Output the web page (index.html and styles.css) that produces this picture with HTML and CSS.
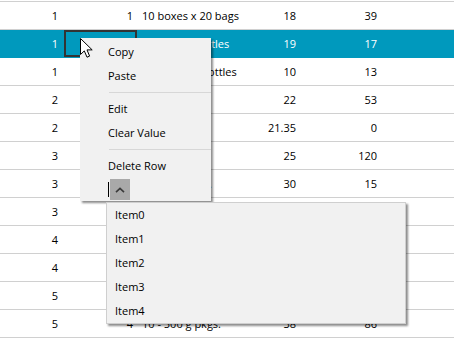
FILE: index.html
```html
<!DOCTYPE html>
<html>
<head>
<title>Products Grid</title>
<meta name="viewport" content="width=device-width, initial-scale=1">
<link rel="stylesheet" href="styles.css">
</head>
<body>
  <div class="grid">
    <div class="row"><span class="num">1</span><span class="num">1</span><span class="text">10 boxes x 20 bags</span><span class="num">18</span><span class="num">39</span><span></span></div>
    <div class="row selected"><span class="num">1</span><span class="num focus">1</span><span class="text">24 - 12 oz bottles</span><span class="num">19</span><span class="num">17</span><span></span></div>
    <div class="row"><span class="num">1</span><span class="num">2</span><span class="text">12 - 550 ml bottles</span><span class="num">10</span><span class="num">13</span><span></span></div>
    <div class="row"><span class="num">2</span><span class="num">2</span><span class="text">48 - 6 oz jars</span><span class="num">22</span><span class="num">53</span><span></span></div>
    <div class="row"><span class="num">2</span><span class="num">2</span><span class="text">36 boxes</span><span class="num">21.35</span><span class="num">0</span><span></span></div>
    <div class="row"><span class="num">3</span><span class="num">2</span><span class="text">12 - 8 oz jars</span><span class="num">25</span><span class="num">120</span><span></span></div>
    <div class="row"><span class="num">3</span><span class="num">7</span><span class="text">12 - 1 lb pkgs.</span><span class="num">30</span><span class="num">15</span><span></span></div>
    <div class="row"><span class="num">3</span><span class="num">2</span><span class="text">12 - 12 oz jars</span><span class="num">40</span><span class="num">6</span><span></span></div>
    <div class="row"><span class="num">4</span><span class="num">6</span><span class="text">18 - 500 g pkgs.</span><span class="num">97</span><span class="num">29</span><span></span></div>
    <div class="row"><span class="num">4</span><span class="num">8</span><span class="text">12 - 200 ml jars</span><span class="num">31</span><span class="num">31</span><span></span></div>
    <div class="row"><span class="num">5</span><span class="num">4</span><span class="text">1 kg pkg.</span><span class="num">21</span><span class="num">22</span><span></span></div>
    <div class="row"><span class="num">5</span><span class="num">4</span><span class="text">10 - 500 g pkgs.</span><span class="num">38</span><span class="num">86</span><span></span></div>
    <div class="row"><span></span><span></span><span></span><span></span><span></span><span></span></div>
  </div>

  <div class="menu">
    <div class="item">Copy</div>
    <div class="item">Paste</div>
    <div class="sep"></div>
    <div class="item">Edit</div>
    <div class="item">Clear Value</div>
    <div class="sep"></div>
    <div class="item">Delete Row</div>
    <div class="scroll-row">
      <span class="caret"></span>
      <span class="scroll-btn">
        <svg width="10" height="6" viewBox="0 0 10 6"><path d="M1 5.2 L5 1.4 L9 5.2" fill="none" stroke="#3a3a3a" stroke-width="1.6"/></svg>
      </span>
    </div>
  </div>

  <div class="dropdown">
    <div class="item">Item0</div>
    <div class="item">Item1</div>
    <div class="item">Item2</div>
    <div class="item">Item3</div>
    <div class="item">Item4</div>
  </div>

  <!-- mouse pointer -->
  <svg class="pointer" width="14" height="21" viewBox="0 0 14 21">
    <path d="M0.5 0.5 L0.5 16.5 L4.3 12.9 L7 19.2 L9.6 18.1 L7 11.9 L12.2 11.9 Z" fill="#fff" stroke="#000" stroke-width="1" stroke-linejoin="miter"/>
  </svg>
</body>
</html>
```

FILE: styles.css
```css
body { margin: 0; padding: 1px 0 0 0; font-family: "Open Sans", "Noto Sans", sans-serif; font-size: 11px; color: #000; background: #fff; overflow: hidden; height: 344px; }
.grid { border-top: 1px solid #d0d0d0; }
.row { display: grid; grid-template-columns: 64px 73px 105px 60px 81px 1fr; height: 27px; line-height: 27px; border-bottom: 1px solid #d0d0d0; }
.row span { white-space: nowrap; }
.row .num { text-align: right; padding-right: 6px; }
.row .num:nth-child(2) { padding-right: 4px; }
.row .text { padding-left: 5px; }
.row.selected { background: #0099bd; color: #fff; border-bottom-color: #0099bd; }
.row .focus { box-shadow: inset 0 0 0 2px #333; }

.menu { position: absolute; left: 80px; top: 38px; width: 131px; padding-top: 2px; background: #f1f1f1; box-shadow: 2px 2px 2px rgba(0,0,0,0.45); }
.menu .item { height: 24px; line-height: 24px; padding-left: 28px; }
.menu .sep { height: 1px; background: #d7d7d7; margin: 4px 0 4px 29px; }
.scroll-row { display: flex; align-items: flex-start; height: 23px; padding-left: 28px; }
.caret { width: 1px; height: 15px; background: #000; margin-top: 4px; }
.scroll-btn { display: flex; align-items: center; justify-content: center; width: 20px; height: 21px; margin-left: 1px; margin-top: 1px; background: #a9a9a9; }

.dropdown { position: absolute; left: 106px; top: 202px; width: 298px; background: #f1f1f1; border: 1px solid #cfcfcf; box-shadow: 2px 2px 2px rgba(0,0,0,0.45); }
.dropdown .item { height: 24px; line-height: 24px; padding-left: 8px; }

.pointer { position: absolute; left: 80px; top: 38px; }
```
